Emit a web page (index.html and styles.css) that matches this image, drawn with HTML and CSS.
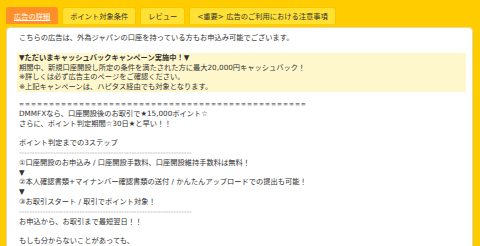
FILE: index.html
```html
<!DOCTYPE html>
<html lang="ja">
<head>
    <meta charset="UTF-8">
    <meta name="viewport" content="width=device-width, initial-scale=1.0">
    <title>広告の詳細</title>
    <link rel="stylesheet" href="styles.css">
</head>
<body>
    <div class="tabs">
        <a class="tab active">広告の詳細</a>
        <a class="tab">ポイント対象条件</a>
        <a class="tab">レビュー</a>
        <a class="tab">&lt;重要&gt; 広告のご利用における注意事項</a>
    </div>

    <div class="panel">
        <p class="intro">こちらの広告は、外為ジャパンの口座を持っている方もお申込み可能でございます。</p>

        <div class="notice">
            <strong>▼ただいまキャッシュバックキャンペーン実施中！▼</strong><br>
            期間中、新規口座開設し所定の条件を満たされた方に最大20,000円キャッシュバック！<br>
            ※詳しくは必ず広告主のページをご確認ください。<br>
            ※上記キャンペーンは、ハピタス経由でも対象となります。
        </div>

        <p class="body-text">
            <span class="rule-eq">================================================</span><br>
            DMMFXなら、口座開設後のお取引で★15,000ポイント☆<br>
            さらに、ポイント判定期間☆30日★と早い！！<br>
            <br>
            ポイント判定までの3ステップ<br>
            <span class="rule-dash">------------------------------------------------------------------</span><br>
            ①口座開設のお申込み / 口座開設手数料、口座開設維持手数料は無料！<br>
            ▼<br>
            ②本人確認書類+マイナンバー確認書類の送付 / かんたんアップロードでの提出も可能！<br>
            ▼<br>
            ③お取引スタート / 取引でポイント対象！<br>
            <span class="rule-dash">------------------------------------------------------------------</span><br>
            お申込から、お取引まで最短翌日！！<br>
            <br>
            もしも分からないことがあっても、
        </p>
    </div>
</body>
</html>
```

FILE: styles.css
```css
body {
    margin: 0;
    padding: 7px 7px 0 6px;
    height: 246px;
    overflow: hidden;
    box-sizing: border-box;
    background: #ffcc00;
    font-family: "DejaVu Sans", "Noto Sans CJK JP", sans-serif;
    font-size: 7.25px;
    color: #333;
}

.tabs {
    display: flex;
    gap: 4px;
}

.tab {
    display: block;
    height: 17px;
    line-height: 17px;
    padding: 0 7px;
    background: #ffe033;
    border: 1px solid #f5c700;
    border-bottom: none;
    border-radius: 3px 3px 0 0;
    box-sizing: border-box;
    white-space: nowrap;
    color: #333;
}

.tab.active {
    background: #ff8f2a;
    border-color: #ff8f2a;
    color: #fff;
    text-decoration: underline;
}

.panel {
    margin-top: 3px;
    padding: 5px 6px 20px 12px;
    background: #fff;
    border: 1px solid #e6d9a0;
    border-radius: 4px;
    line-height: 9.8px;
}

.intro {
    margin: 0 0 10px;
}

.notice {
    margin: 0 0 7px -2px;
    padding: 0 2px;
    background: #fff7cc;
}

.body-text {
    margin: 0;
}

.rule-eq {
    color: #6f6f6f;
    font-weight: bold;
    font-size: 6px;
    letter-spacing: 0.97px;
}

.rule-dash {
    color: #999;
}
```
